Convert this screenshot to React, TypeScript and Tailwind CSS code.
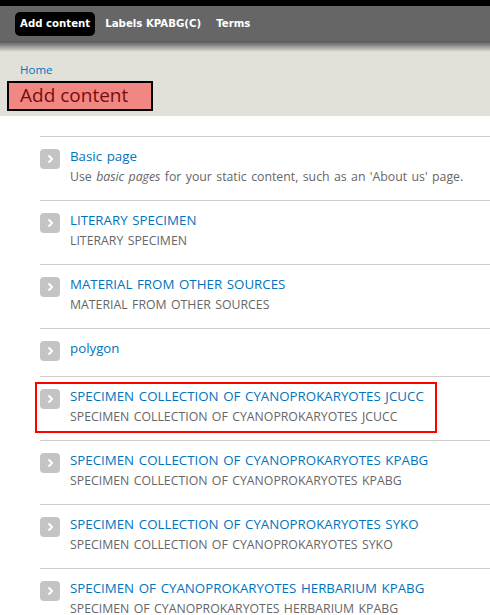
import React from 'react';

type Item = { title: string; desc?: React.ReactNode; marked?: boolean };

const items: Item[] = [
  {
    title: 'Basic page',
    desc: (
      <>
        Use <em>basic pages</em> for your static content, such as an 'About us' page.
      </>
    ),
  },
  { title: 'LITERARY SPECIMEN', desc: 'LITERARY SPECIMEN' },
  { title: 'MATERIAL FROM OTHER SOURCES', desc: 'MATERIAL FROM OTHER SOURCES' },
  { title: 'polygon' },
  {
    title: 'SPECIMEN COLLECTION OF CYANOPROKARYOTES JCUCC',
    desc: 'SPECIMEN COLLECTION OF CYANOPROKARYOTES JCUCC',
    marked: true,
  },
  {
    title: 'SPECIMEN COLLECTION OF CYANOPROKARYOTES KPABG',
    desc: 'SPECIMEN COLLECTION OF CYANOPROKARYOTES KPABG',
  },
  {
    title: 'SPECIMEN COLLECTION OF CYANOPROKARYOTES SYKO',
    desc: 'SPECIMEN COLLECTION OF CYANOPROKARYOTES SYKO',
  },
  {
    title: 'SPECIMEN OF CYANOPROKARYOTES HERBARIUM KPABG',
    desc: 'SPECIMEN OF CYANOPROKARYOTES HERBARIUM KPABG',
  },
];

function Arrow() {
  return (
    <span className="mt-[3px] w-[20px] h-[20px] shrink-0 rounded-[4px] bg-[#c4c4c4] flex items-center justify-center">
      <svg width="20" height="20" viewBox="0 0 20 20">
        <path d="M8.5 6.5l3.5 3.5-3.5 3.5" fill="none" stroke="#fff" strokeWidth="2" />
      </svg>
    </span>
  );
}

export default function App() {
  return (
    <div className="min-h-screen bg-white overflow-hidden font-['Open_Sans',sans-serif]">
      {/* Toolbar */}
      <div className="h-[6px] bg-black" />
      <nav className="h-[35px] bg-[#666666] flex items-center px-[15px] gap-[5px] font-['DejaVu_Sans',sans-serif] text-[10.2px] font-bold text-white">
        <a className="px-[5px] h-[24px] flex items-center rounded-[5px] bg-black">Add content</a>
        <a className="px-[5px] h-[24px] flex items-center">Labels KPABG(C)</a>
        <a className="px-[5px] h-[24px] flex items-center">Terms</a>
      </nav>

      {/* Header */}
      <header className="bg-[#e1e0d9] pb-[5px]">
        <div className="h-[11px] bg-gradient-to-b from-[#555555] to-[#e1e0d9]" />
        <div className="pt-[10px] pl-[20px] text-[11.5px] leading-[16px] text-[#0074bd]">Home</div>
        <h1 className="mt-[3px] ml-[7px] w-[146px] h-[30px] border-2 border-black bg-[#f08782] pl-[11px] text-[19px] leading-[25px] text-[#7a0c0c]">
          Add content
        </h1>
      </header>

      {/* Content types */}
      <ul className="ml-[40px] pt-[20px]">
        {items.map((it) => (
          <li
            key={it.title}
            className={
              it.desc
                ? 'relative border-t border-[#cccccc] flex pt-[9px] pb-[12px]'
                : 'relative border-t border-[#cccccc] flex pt-[9px] pb-[15px]'
            }
          >
            <Arrow />
            <div className="ml-[10px] whitespace-nowrap [word-spacing:1.2px]">
              <div className="text-[13.3px] leading-[20px] text-[#0074bd]">{it.title}</div>
              {it.desc && <div className="text-[12.3px] leading-[22px] text-[#666666]">{it.desc}</div>}
            </div>
            {it.marked && (
              <div className="absolute left-[-5px] top-[5px] w-[402px] h-[51px] border-2 border-[#ff0000]" />
            )}
          </li>
        ))}
      </ul>
    </div>
  );
}
